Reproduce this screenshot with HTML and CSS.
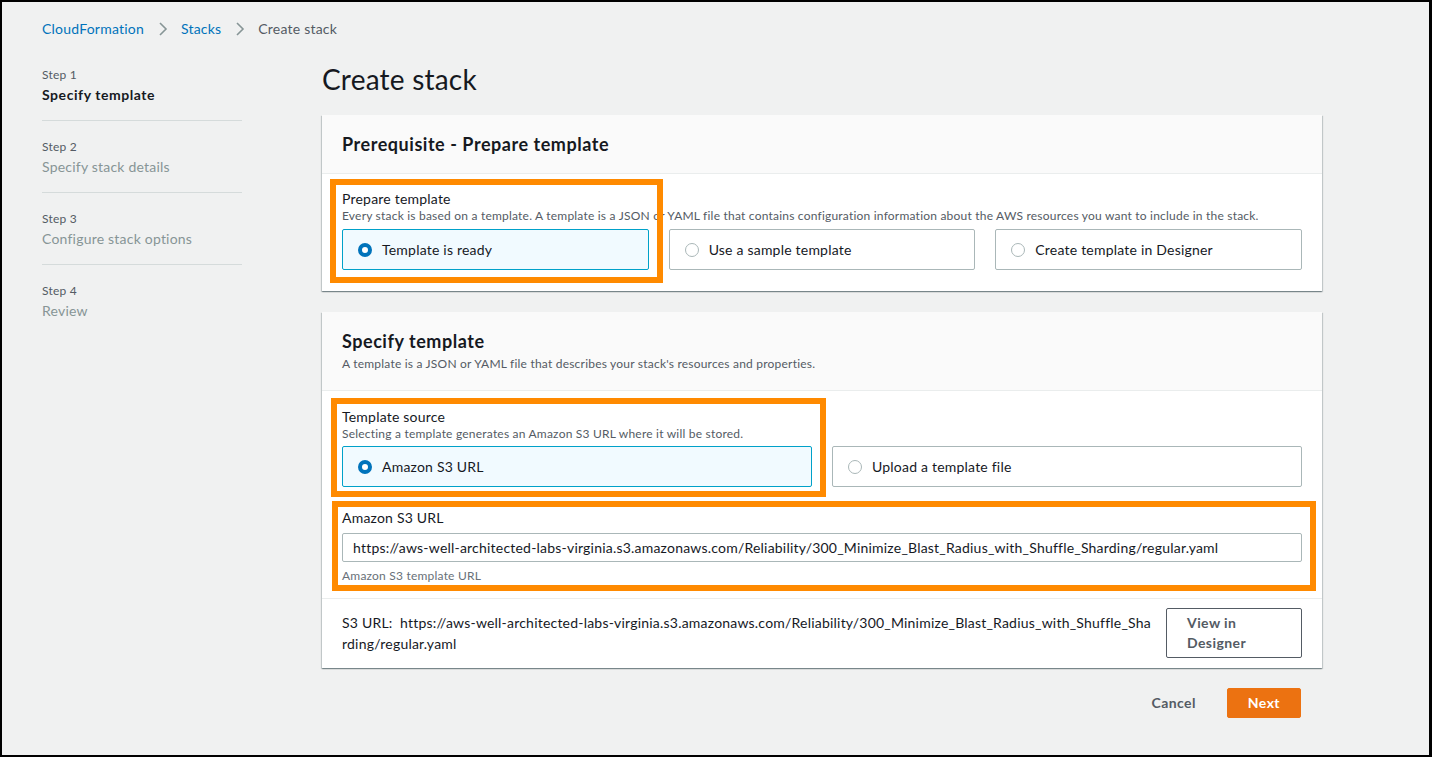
FILE: index.html
```html
<!DOCTYPE html>
<html lang="en">
<head>
<meta charset="utf-8">
<title>Create stack</title>
<link rel="stylesheet" href="styles.css">
</head>
<body>
<div class="frame">
  <nav class="breadcrumb">
    <a class="crumb-link" href="#">CloudFormation</a>
    <svg class="chev" width="10" height="14" viewBox="0 0 10 14"><polyline points="2,1 8,7 2,13" fill="none" stroke="#879596" stroke-width="1.6"/></svg>
    <a class="crumb-link" href="#">Stacks</a>
    <svg class="chev" width="10" height="14" viewBox="0 0 10 14"><polyline points="2,1 8,7 2,13" fill="none" stroke="#879596" stroke-width="1.6"/></svg>
    <span class="crumb-current">Create stack</span>
  </nav>

  <div class="layout">
    <aside class="steps">
      <div class="step">
        <div class="step-num">Step 1</div>
        <div class="step-title active">Specify template</div>
      </div>
      <div class="step">
        <div class="step-num">Step 2</div>
        <div class="step-title">Specify stack details</div>
      </div>
      <div class="step">
        <div class="step-num">Step 3</div>
        <div class="step-title">Configure stack options</div>
      </div>
      <div class="step last">
        <div class="step-num">Step 4</div>
        <div class="step-title">Review</div>
      </div>
    </aside>

    <main class="main">
      <h1 class="page-title">Create stack</h1>

      <section class="card">
        <header class="card-header">
          <h2 class="card-title">Prerequisite - Prepare template</h2>
        </header>
        <div class="card-body body-1">
          <div class="field">
            <div class="field-label">Prepare template</div>
            <div class="field-desc">Every stack is based on a template. A template is a JSON or YAML file that contains configuration information about the AWS resources you want to include in the stack.</div>
            <div class="tiles three">
              <label class="tile selected"><span class="radio checked"></span><span>Template is ready</span></label>
              <label class="tile"><span class="radio"></span><span>Use a sample template</span></label>
              <label class="tile"><span class="radio"></span><span>Create template in Designer</span></label>
            </div>
            <div class="highlight hl-1"></div>
          </div>
        </div>
      </section>

      <section class="card second">
        <header class="card-header">
          <h2 class="card-title">Specify template</h2>
          <p class="card-desc">A template is a JSON or YAML file that describes your stack's resources and properties.</p>
        </header>
        <div class="card-body body-2">
          <div class="field">
            <div class="field-label">Template source</div>
            <div class="field-desc">Selecting a template generates an Amazon S3 URL where it will be stored.</div>
            <div class="tiles two">
              <label class="tile selected"><span class="radio checked"></span><span>Amazon S3 URL</span></label>
              <label class="tile"><span class="radio"></span><span>Upload a template file</span></label>
            </div>
            <div class="highlight hl-2"></div>
          </div>
          <div class="field field-url">
            <div class="field-label">Amazon S3 URL</div>
            <div class="input">https://aws-well-architected-labs-virginia.s3.amazonaws.com/Reliability/300_Minimize_Blast_Radius_with_Shuffle_Sharding/regular.yaml</div>
            <div class="field-help">Amazon S3 template URL</div>
            <div class="highlight hl-3"></div>
          </div>
        </div>
        <div class="card-footer">
          <div class="s3-text">S3 URL:&nbsp; https://aws-well-architected-labs-virginia.s3.amazonaws.com/Reliability/300_Minimize_Blast_Radius_with_Shuffle_Sharding/regular.yaml</div>
          <button class="btn-outline">View in Designer</button>
        </div>
      </section>

      <div class="actions">
        <button class="btn-link">Cancel</button>
        <button class="btn-primary">Next</button>
      </div>
    </main>
  </div>
</div>
</body>
</html>
```

FILE: styles.css
```css
* { box-sizing: border-box; }

html, body {
  margin: 0;
  padding: 0;
}

body {
  font-family: Lato, "Open Sans", sans-serif;
  color: #16191f;
  font-size: 14px;
  letter-spacing: 0.015em;
}

.frame {
  width: 1432px;
  height: 757px;
  border: 2px solid #000;
  border-right-width: 3px;
  background: #f0f1f1;
  padding: 17px 40px 0 40px;
  overflow: hidden;
}

/* breadcrumb */
.breadcrumb {
  display: flex;
  align-items: center;
  height: 20px;
  line-height: 20px;
  font-size: 14px;
}
.crumb-link {
  color: #0073bb;
  text-decoration: none;
}
.crumb-current {
  color: #545b64;
}
.chev {
  margin: 0 13px 0 14px;
  display: block;
}

/* layout */
.layout {
  display: grid;
  grid-template-columns: 200px 1000px;
  column-gap: 80px;
}

/* steps */
.steps {
  margin-top: 28px;
}
.step {
  padding: 0 0 15px 0;
  border-bottom: 1px solid #d5dbdb;
  margin-bottom: 18px;
}
.step.last {
  border-bottom: none;
}
.step-num {
  font-size: 12px;
  line-height: 16px;
  color: #545b64;
}
.step-title {
  margin-top: 2px;
  font-size: 14px;
  line-height: 20px;
  color: #879596;
}
.step-title.active {
  color: #16191f;
  font-weight: 700;
  letter-spacing: 0.04em;
}

/* main */
.page-title {
  margin: 22px 0 18px 0;
  font-size: 28px;
  line-height: 36px;
  font-weight: 400;
  color: #16191f;
}

.card {
  background: #fff;
  box-shadow: 0 1px 1px 0 rgba(0, 28, 36, .3), 1px 1px 1px 0 rgba(0, 28, 36, .15), -1px 1px 1px 0 rgba(0, 28, 36, .15);
}
.card.second {
  margin-top: 21px;
}
.card-header {
  background: #fafafa;
  border-bottom: 1px solid #eaeded;
  padding: 18px 20px;
}
.card-title {
  margin: 0;
  font-size: 18px;
  line-height: 22px;
  font-weight: 700;
  letter-spacing: 0.03em;
}
.card-desc {
  margin: 4px 0 0 0;
  font-size: 12px;
  line-height: 16px;
  color: #545b64;
}
.card-body {
  padding: 16px 20px 20px 20px;
}
.card-body.body-1 {
  padding-bottom: 21px;
}
.card-body.body-2 {
  padding-top: 17px;
  padding-bottom: 14px;
}

.field {
  position: relative;
}
.field-label {
  font-size: 14px;
  line-height: 18px;
  color: #16191f;
}
.field-desc {
  font-size: 12px;
  line-height: 16px;
  color: #545b64;
  position: relative;
}
.tiles {
  display: grid;
  column-gap: 20px;
  margin-top: 5px;
}
.tiles.three { grid-template-columns: 1fr 1fr 1fr; }
.tiles.two { grid-template-columns: 1fr 1fr; margin-top: 4px; }

.tile {
  display: flex;
  align-items: center;
  height: 41px;
  padding: 0 15px;
  border: 1px solid #aab7b8;
  border-radius: 2px;
  background: #fff;
  font-size: 14px;
  color: #16191f;
}
.tile.selected {
  border-color: #00a1c9;
  background: #f1faff;
}
.radio {
  width: 14px;
  height: 14px;
  border-radius: 50%;
  border: 1px solid #aab7b8;
  background: #fff;
  margin-right: 10px;
  flex: none;
}
.radio.checked {
  border: 4px solid #0073bb;
}

.field-url {
  margin-top: 22px;
}
.field-url .field-label {
  margin-bottom: 6px;
}
.input {
  height: 29px;
  line-height: 27px;
  border: 1px solid #aab7b8;
  border-radius: 2px;
  padding: 0 10px;
  font-size: 14px;
  color: #16191f;
  white-space: nowrap;
  overflow: hidden;
}
.field-help {
  margin-top: 6px;
  font-size: 12px;
  line-height: 16px;
  color: #687078;
}

.highlight {
  position: absolute;
  border: 6px solid #ff8a00;
  pointer-events: none;
}
.hl-1 { left: -12px; top: -11px; width: 333px; height: 104px; }
.hl-2 { left: -11px; top: -10px; width: 495px; height: 99px; }
.hl-3 { left: -10px; top: -8px; width: 984px; height: 90px; }

.card-footer {
  border-top: 1px solid #eaeded;
  padding: 9px 20px 10px 20px;
  display: flex;
  align-items: center;
}
.s3-text {
  flex: 1;
  font-size: 14px;
  line-height: 21px;
  word-break: break-all;
  margin-right: 12px;
}
.btn-outline {
  width: 136px;
  flex: none;
  text-align: left;
  background: #fff;
  border: 1px solid #545b64;
  border-radius: 2px;
  padding: 4px 20px;
  font-family: inherit;
  font-size: 14px;
  line-height: 20px;
  font-weight: 700;
  letter-spacing: 0.03em;
  color: #545b64;
}

.actions {
  display: flex;
  justify-content: flex-end;
  align-items: center;
  margin-top: 20px;
  padding-right: 21px;
}
.btn-link {
  background: none;
  border: none;
  padding: 4px 20px;
  margin-right: 11px;
  font-family: inherit;
  font-size: 14px;
  line-height: 22px;
  font-weight: 700;
  letter-spacing: 0.03em;
  color: #545b64;
}
.btn-primary {
  background: #ec7211;
  border: 1px solid #ec7211;
  border-radius: 2px;
  padding: 3px 20px;
  height: 30px;
  font-family: inherit;
  font-size: 14px;
  line-height: 22px;
  font-weight: 700;
  letter-spacing: 0.03em;
  color: #fff;
}
```
